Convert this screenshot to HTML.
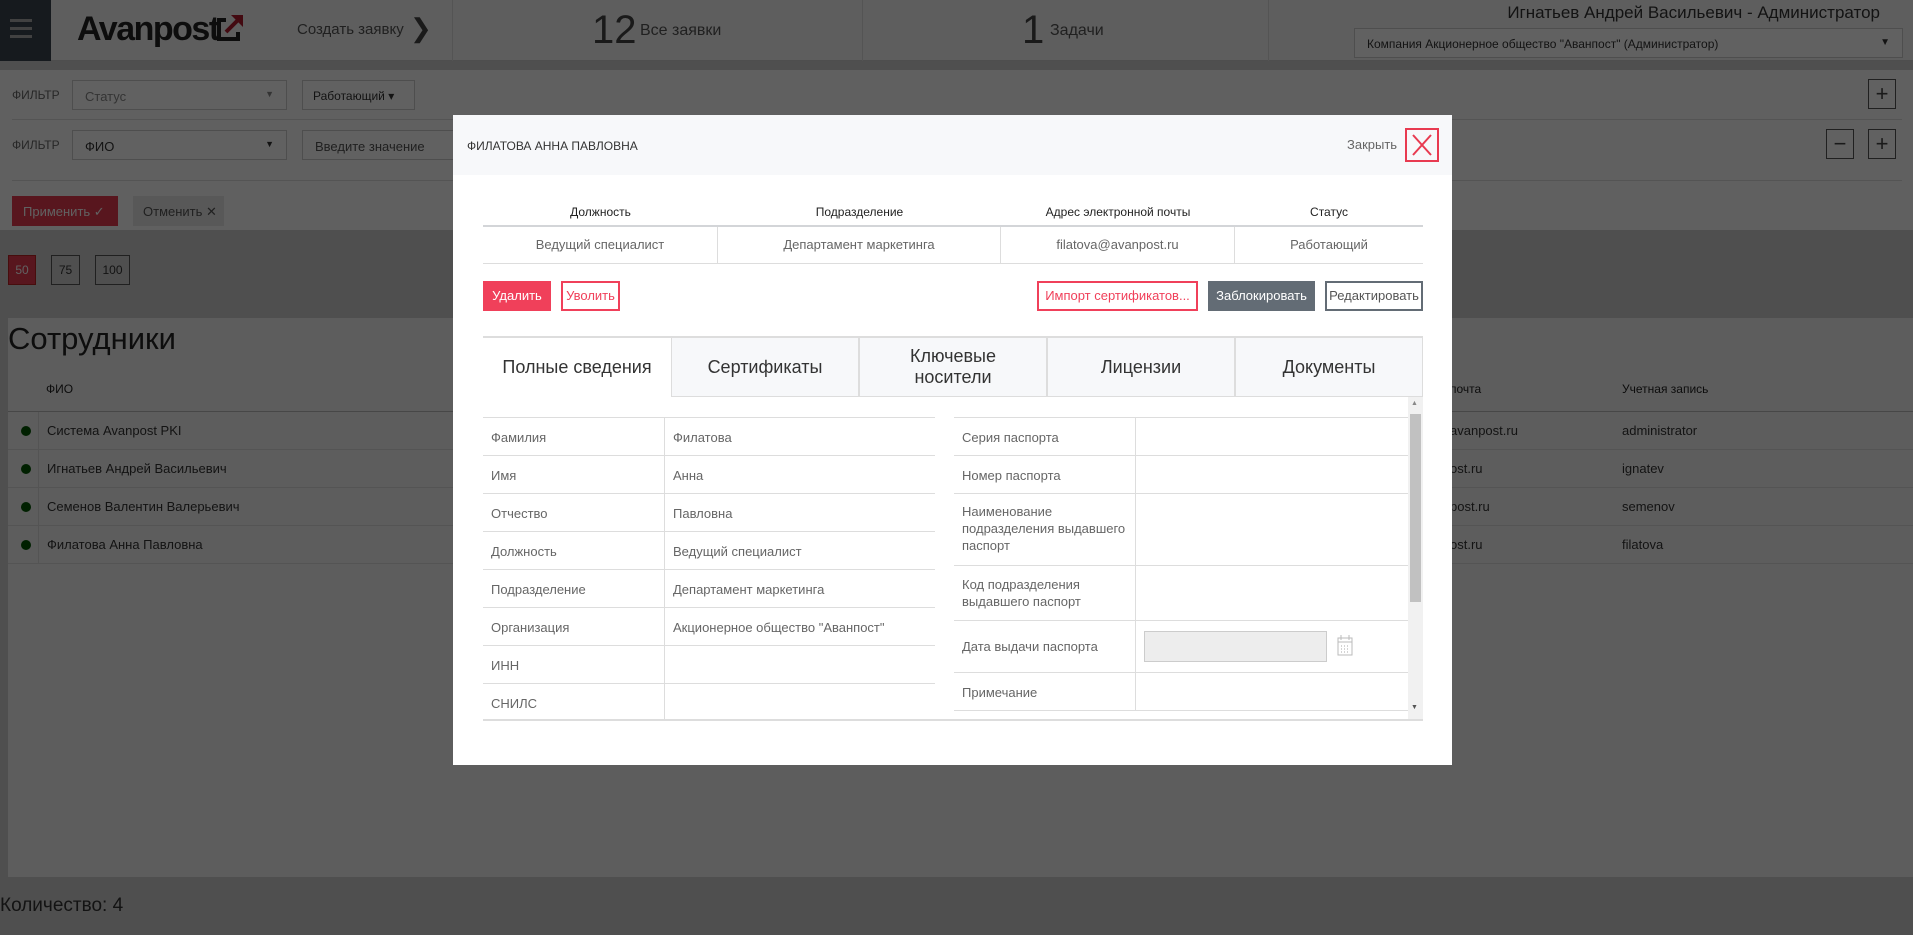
<!DOCTYPE html>
<html><head><meta charset="utf-8"><style>
*{box-sizing:border-box;margin:0;padding:0}
body{width:1913px;height:935px;overflow:hidden;position:relative;font-family:"Liberation Sans",sans-serif;background:#cfcfcf;color:#333}
.a{position:absolute}
.hdr{left:0;top:0;width:1913px;height:61px;background:#f7f7f7;border-bottom:1px solid #ccc}
.vd{width:1px;background:#ddd;top:0;height:61px}
.filt{left:0;top:70px;width:1913px;height:160px;background:#fbfbfb}
.sel{border:1px solid #ccc;background:#fff;height:30px;font-size:13px;color:#888;padding:8px 12px;white-space:nowrap}
.sq{border:1px solid #555;width:28px;height:30px;font-size:22px;text-align:center;line-height:28px;color:#444;background:#fff}
.ov{left:0;top:0;width:1913px;height:935px;background:rgba(0,0,0,.62)}
.m{left:453px;top:115px;width:999px;height:650px;background:#fff}
.mc{font-size:13px;color:#555}
.tab{top:336px;height:61px;border:1px solid #ddd;border-top:2px solid #ddd;background:#f7f8fa;font-size:18px;color:#333;display:flex;align-items:center;justify-content:center;text-align:center;line-height:21px}
.row{border-bottom:1px solid #ddd;font-size:13px;color:#666}
.lr{height:38px;border-bottom:1px solid #ddd;position:relative;font-size:13px;color:#333}
.lr .d{position:absolute;left:13px;top:14px;width:10px;height:10px;border-radius:5px;background:#050}
.lr span{position:absolute;top:11px}
</style></head><body>
<div class="a hdr"></div>
<div class="a" style="left:0;top:0;width:51px;height:61px;background:#3a4550"></div>
<div class="a" style="left:10px;top:19px;width:22px;height:3px;background:#aaa;box-shadow:0 8px 0 #aaa,0 16px 0 #aaa"></div>
<div class="a" style="left:77px;top:10px;font-size:34px;font-weight:bold;letter-spacing:-1.5px;color:#222">Avanpost</div>
<svg class="a" style="left:216px;top:12px" width="30" height="30" viewBox="0 0 30 30"><path d="M10 8H3v19h19v-7" stroke="#222" stroke-width="4" fill="none"/><path d="M10 20L22 8" stroke="#b01c2e" stroke-width="4"/><path d="M15 3h12v12z" fill="#b01c2e"/></svg>
<div class="a" style="left:297px;top:21px;font-size:15px;color:#555">Создать заявку</div>
<div class="a" style="left:410px;top:13px;font-size:26px;color:#444">❯</div>
<div class="a vd" style="left:452px"></div><div class="a vd" style="left:862px"></div><div class="a vd" style="left:1268px"></div>
<div class="a" style="left:592px;top:8px;font-size:40px;font-weight:300;color:#444">12</div>
<div class="a" style="left:640px;top:22px;font-size:16px;color:#555">Все заявки</div>
<div class="a" style="left:1022px;top:8px;font-size:40px;color:#444">1</div>
<div class="a" style="left:1050px;top:22px;font-size:16px;color:#555">Задачи</div>
<div class="a" style="left:1480px;top:3px;width:400px;text-align:right;font-size:17px;color:#333">Игнатьев Андрей Васильевич - Администратор</div>
<div class="a sel" style="left:1354px;top:28px;width:549px;height:30px;color:#333;font-size:12px">Компания Акционерное общество "Аванпост" (Администратор)<span style="float:right;font-size:10px">▼</span></div>
<div class="a filt"></div>
<div class="a" style="left:12px;top:88px;font-size:12px;color:#666">ФИЛЬТР</div>
<div class="a sel" style="left:72px;top:80px;width:215px">Статус<span style="float:right;font-size:9px">▼</span></div>
<div class="a sel" style="left:302px;top:80px;width:113px;color:#333;padding:8px 10px;font-size:12px">Работающий ▾</div>
<div class="a" style="left:12px;top:119px;width:1890px;height:1px;background:#ddd"></div>
<div class="a" style="left:12px;top:138px;font-size:12px;color:#666">ФИЛЬТР</div>
<div class="a sel" style="left:72px;top:130px;width:215px;color:#333">ФИО<span style="float:right;font-size:9px">▼</span></div>
<div class="a sel" style="left:302px;top:130px;width:200px;color:#555">Введите значение</div>
<div class="a" style="left:12px;top:180px;width:1890px;height:1px;background:#ddd"></div>
<div class="a" style="left:12px;top:196px;width:106px;height:30px;background:#e83a50;color:#fff;font-size:13px;padding:8px 11px;white-space:nowrap">Применить ✓</div>
<div class="a" style="left:133px;top:196px;width:91px;height:30px;background:#e8e8e8;color:#555;font-size:13px;padding:8px 10px;white-space:nowrap">Отменить ✕</div>
<div class="a sq" style="left:1868px;top:79px">+</div>
<div class="a sq" style="left:1826px;top:129px">−</div>
<div class="a sq" style="left:1868px;top:129px">+</div>
<div class="a" style="left:8px;top:255px;width:28px;height:30px;background:#e83a50;border:1px solid #b22;color:#fff;font-size:12px;text-align:center;line-height:28px">50</div>
<div class="a" style="left:51px;top:255px;width:29px;height:30px;border:1px solid #555;font-size:12px;text-align:center;line-height:28px">75</div>
<div class="a" style="left:95px;top:255px;width:35px;height:30px;border:1px solid #555;font-size:12px;text-align:center;line-height:28px">100</div>
<div class="a" style="left:8px;top:318px;width:1905px;height:559px;background:#f5f5f5"></div>
<div class="a" style="left:8px;top:321px;font-size:31px;color:#222">Сотрудники</div>
<div class="a" style="left:46px;top:382px;font-size:12px;color:#222">ФИО</div>
<div class="a" style="left:1450px;top:382px;font-size:12px;color:#222">почта</div>
<div class="a" style="left:1622px;top:382px;font-size:12px;color:#222">Учетная запись</div>
<div class="a" style="left:8px;top:411px;width:1905px;height:1px;background:#bbb"></div>
<div class="a" style="left:38px;top:412px;width:1px;height:152px;background:#ddd"></div>
<div class="a" style="left:8px;top:412px;width:1905px">
 <div class="lr"><i class="d"></i><span style="left:39px">Система Avanpost PKI</span><span style="left:1442px">avanpost.ru</span><span style="left:1614px">administrator</span></div>
 <div class="lr"><i class="d"></i><span style="left:39px">Игнатьев Андрей Васильевич</span><span style="left:1442px">ost.ru</span><span style="left:1614px">ignatev</span></div>
 <div class="lr"><i class="d"></i><span style="left:39px">Семенов Валентин Валерьевич</span><span style="left:1442px">post.ru</span><span style="left:1614px">semenov</span></div>
 <div class="lr"><i class="d"></i><span style="left:39px">Филатова Анна Павловна</span><span style="left:1442px">ost.ru</span><span style="left:1614px">filatova</span></div>
</div>
<div class="a" style="left:0;top:895px;font-size:19px;color:#333">Количество: 4</div>
<div class="a ov"></div>

<div class="a m"></div>
<div class="a" style="left:453px;top:115px;width:999px;height:60px;background:#f7f8fa"></div>
<div class="a mc" style="left:467px;top:139px;font-size:12px;color:#333">ФИЛАТОВА АННА ПАВЛОВНА</div>
<div class="a mc" style="left:1347px;top:137px;font-size:13px;color:#666">Закрыть</div>
<div class="a" style="left:1405px;top:128px;width:34px;height:34px;border:2px solid #e83a50">
<svg width="30" height="30" viewBox="0 0 30 30"><path d="M6 5L24 25M24 5L6 25" stroke="#e83a50" stroke-width="2" fill="none"/></svg></div>
<div class="a" style="left:483px;top:205px;width:940px;display:flex;font-size:12px;color:#222;text-align:center">
<div style="width:235px">Должность</div><div style="width:283px">Подразделение</div><div style="width:234px">Адрес электронной почты</div><div style="width:188px">Статус</div></div>
<div class="a" style="left:483px;top:225px;width:940px;height:2px;background:#d3d5d8"></div>
<div class="a" style="left:483px;top:227px;width:940px;height:37px;border-bottom:1px solid #ddd;display:flex;font-size:13px;color:#666;text-align:center;line-height:36px">
<div style="width:235px;border-right:1px solid #ddd">Ведущий специалист</div><div style="width:283px;border-right:1px solid #ddd">Департамент маркетинга</div><div style="width:234px;border-right:1px solid #ddd">filatova@avanpost.ru</div><div style="width:188px">Работающий</div></div>
<div class="a" style="left:483px;top:281px;width:68px;height:30px;background:#f0405a;color:#fff;font-size:13px;text-align:center;line-height:30px">Удалить</div>
<div class="a" style="left:561px;top:281px;width:59px;height:30px;border:2px solid #f0405a;color:#f0405a;font-size:13px;text-align:center;line-height:26px">Уволить</div>
<div class="a" style="left:1037px;top:281px;width:161px;height:30px;border:2px solid #f0405a;color:#f0405a;font-size:13px;text-align:center;line-height:26px">Импорт сертификатов...</div>
<div class="a" style="left:1208px;top:281px;width:107px;height:30px;background:#636c75;color:#fff;font-size:13px;text-align:center;line-height:30px">Заблокировать</div>
<div class="a" style="left:1325px;top:281px;width:98px;height:30px;border:2px solid #636c75;color:#555;font-size:13px;text-align:center;line-height:26px">Редактировать</div>
<div class="a" style="left:483px;top:336px;width:940px;height:2px;background:#ddd"></div>
<div class="a tab" style="left:483px;width:188px;background:#fff;border:none;border-top:2px solid #ddd">Полные сведения</div>
<div class="a tab" style="left:671px;width:188px">Сертификаты</div>
<div class="a tab" style="left:859px;width:188px">Ключевые<br>носители</div>
<div class="a tab" style="left:1047px;width:188px">Лицензии</div>
<div class="a tab" style="left:1235px;width:188px">Документы</div>
<div class="a" style="left:1408px;top:397px;width:15px;height:322px;background:#f1f1f1"></div>
<div class="a" style="left:1410px;top:414px;width:11px;height:188px;background:#c1c1c1"></div>
<div class="a" style="left:1411px;top:400px;font-size:7px;color:#888">▲</div>
<div class="a" style="left:1411px;top:704px;font-size:7px;color:#555">▼</div>
<div class="a" style="left:483px;top:417px;width:452px;border-top:1px solid #ddd">
<div class="row" style="height:38px;display:flex"><div style="width:182px;padding:12px 8px;border-right:1px solid #ddd">Фамилия</div><div style="padding:12px 8px">Филатова</div></div>
<div class="row" style="height:38px;display:flex"><div style="width:182px;padding:12px 8px;border-right:1px solid #ddd">Имя</div><div style="padding:12px 8px">Анна</div></div>
<div class="row" style="height:38px;display:flex"><div style="width:182px;padding:12px 8px;border-right:1px solid #ddd">Отчество</div><div style="padding:12px 8px">Павловна</div></div>
<div class="row" style="height:38px;display:flex"><div style="width:182px;padding:12px 8px;border-right:1px solid #ddd">Должность</div><div style="padding:12px 8px">Ведущий специалист</div></div>
<div class="row" style="height:38px;display:flex"><div style="width:182px;padding:12px 8px;border-right:1px solid #ddd">Подразделение</div><div style="padding:12px 8px">Департамент маркетинга</div></div>
<div class="row" style="height:38px;display:flex"><div style="width:182px;padding:12px 8px;border-right:1px solid #ddd">Организация</div><div style="padding:12px 8px">Акционерное общество "Аванпост"</div></div>
<div class="row" style="height:38px;display:flex"><div style="width:182px;padding:12px 8px;border-right:1px solid #ddd">ИНН</div><div></div></div>
<div class="row" style="height:37px;display:flex;border:none"><div style="width:182px;padding:12px 8px;border-right:1px solid #ddd">СНИЛС</div><div></div></div>
</div>
<div class="a" style="left:954px;top:417px;width:454px;border-top:1px solid #ddd">
<div class="row" style="height:38px;display:flex"><div style="width:182px;padding:12px 8px;border-right:1px solid #ddd">Серия паспорта</div></div>
<div class="row" style="height:38px;display:flex"><div style="width:182px;padding:12px 8px;border-right:1px solid #ddd">Номер паспорта</div></div>
<div class="row" style="height:72px;display:flex"><div style="width:182px;padding:9px 8px;border-right:1px solid #ddd;line-height:17px">Наименование подразделения выдавшего паспорт</div></div>
<div class="row" style="height:55px;display:flex"><div style="width:182px;padding:10px 8px;border-right:1px solid #ddd;line-height:17px">Код подразделения выдавшего паспорт</div></div>
<div class="row" style="height:52px;display:flex"><div style="width:182px;padding:18px 8px;border-right:1px solid #ddd">Дата выдачи паспорта</div>
<div style="margin:10px 0 0 8px;width:183px;height:31px;background:#ededed;border:1px solid #ccc"></div>
<svg style="margin:13px 0 0 10px" width="16" height="22" viewBox="0 0 16 22"><rect x="1" y="4" width="14" height="17" fill="none" stroke="#bbb"/><path d="M4 1v5M12 1v5M1 8h14" stroke="#bbb"/><path d="M4 12h1M7 12h1M10 12h1M4 15h1M7 15h1M10 15h1M4 18h1M7 18h1M10 18h1" stroke="#aaa"/></svg></div>
<div class="row" style="height:38px;display:flex"><div style="width:182px;padding:12px 8px;border-right:1px solid #ddd">Примечание</div></div>
</div>
<div class="a" style="left:483px;top:719px;width:940px;height:2px;background:#ddd"></div>
</body></html>
